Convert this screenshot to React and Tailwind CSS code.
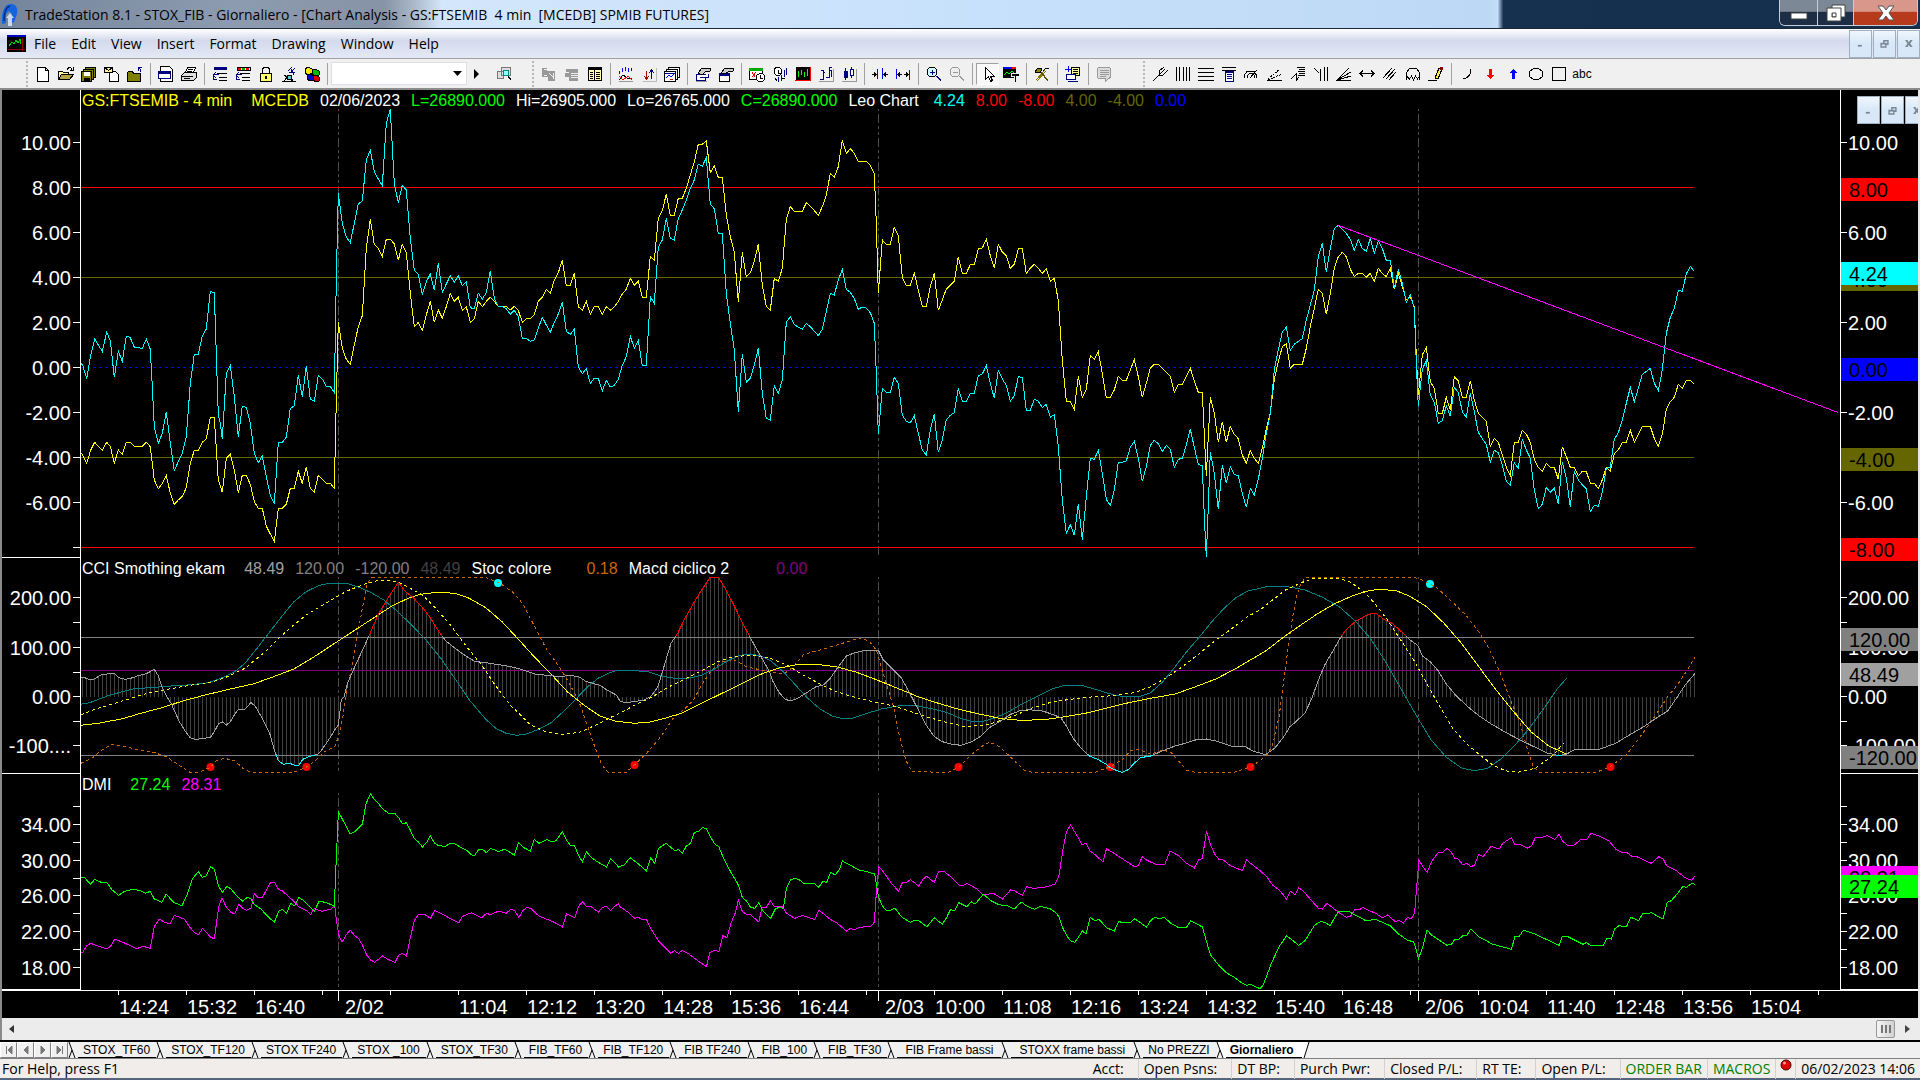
import { Fragment, useState } from 'react';
import clsx from 'clsx';

const K = '#000';
const NAVY = '#000080';
const GRAY = '#999';

// Toolbar glyphs on a 16x16 grid: [path, fill, stroke]
const ICONS = {
  new: [['M2.5 1.5h8l3 3v11h-11z', '#fff', K], ['M10.5 1.5v3h3', 'none', K]],
  open: [['M0.5 13.5v-8h4l1 1h5v3', '#ffff99', K], ['M0.5 13.5l3-5h12l-4 5z', '#b5a642', K], ['M9 3.5c2-3 4-2 5 0M15 1v3h-3', 'none', K]],
  saveAll: [['M4.5 1.5h10v10h-10z', '#808000', K], ['M2.5 3.5h10v10h-10z', '#808000', K], ['M0.5 5.5h10v10h-10z', '#808000', K], ['M3 6h6v4h-6z', '#fff', 'none'], ['M3 12h6v3h-6z', K, 'none']],
  mail: [['M5.5 5.5h6l3 3v7h-9z', '#fff', K], ['M0.5 1.5h8v5h-8z', '#fff799', K], ['M0.5 1.5l4 3l4-3', 'none', K]],
  folder: [['M0.5 15.5v-9l1-1h4l1 2h7v8z', '#808000', K], ['M14 6c0-2-1-3-2-4M11 5v-4h4', 'none', NAVY]],
  pageWin: [['M2.5 0.5h9l3 3v12h-12z', '#fff', K], ['M0.5 5.5h12v7h-12z', '#fff', NAVY], ['M0 5h13v3h-13z', NAVY, 'none']],
  print: [['M4.5 6.5l2-5h8l-2 5', '#fff', K], ['M7 3.5h5M6 5.5h5', 'none', K], ['M0.5 9.5l3-3h12v5l-3 3h-12z', '#ddd', K], ['M1 10.5h11M3 12.5h6', 'none', K]],
  rowsNavy: [['M2 1h13v3h-13z', NAVY, 'none'], ['M5 7.5h10M7 11.5h8M7 14.5h8', 'none', K], ['M1 8.5h6M4 6l-3 3l3 3M1 8v5h4', 'none', NAVY]],
  rowsColor: [['M2 1h13v3h-13z', '#fff', K], ['M3 2h3v2h-3z', 'red', 'none'], ['M7 2h3v2h-3z', '#0a0', 'none'], ['M11 2h3v2h-3z', 'red', 'none'], ['M5 7.5h10M7 11.5h8M7 14.5h8', 'none', K], ['M1 8.5h6M4 6l-3 3l3 3M1 8v5h4', 'none', NAVY]],
  lock: [['M4.5 7v-4l2-2h3l2 2v4', 'none', K], ['M2.5 7.5h11v8h-11z', '#ffff66', K], ['M7 10h2v3h-2z', K, 'none']],
  dish: [['M7 5l4-4M9 7l5-5M8 6l6 1M10 3l3 6', 'none', NAVY], ['M1 15.5h14M3 15l5-6l4 6M3 9l9 6', 'none', K], ['M6 9h4v4h-4z', '#5cc', K]],
  cubes: [['M1 3l3-2l4 2v4l-4 2l-3-2z', '#ffe800', K], ['M8 4l3-1l4 2v4l-4 1l-3-2z', '#0b0', K], ['M3 9l3-1l3 2v4l-3 1l-3-2z', '#00c', K], ['M9 10l3-1l3 2v4l-3 1l-3-2z', '#d00', K]],
  find: [['M1.5 5.5h6v7h-6zM5.5 1.5h9v8h-9z', '#ddd', '#777'], ['M7.5 4.5h5v5h-5z', '#9ff', '#088'], ['M12 10l3 4', 'none', K]],
  grayGridA: [['M1 2h5v3h8v10h-7v-4h-6z', GRAY, 'none'], ['M3 3h3M8 7l4 4M12 7v6M3 9h3', 'none', '#eee']],
  grayGridB: [['M2 3h12v12h-9v-4h-4z', GRAY, 'none'], ['M7 7h7M7 9h7M7 11h7M2 6h3', 'none', '#eee']],
  list: [['M1.5 1.5h13v13h-13z', '#ffffb0', K], ['M1 1h14v3h-14z', K, 'none'], ['M3 6.5h3M3 8.5h3M3 10.5h3M3 12.5h3M9 6.5h4M9 8.5h4M9 10.5h4M9 12.5h4M7.5 4v11', 'none', K]],
  wave: [['M1.5 8v-3M4.5 6v-4M7.5 5v-4M10.5 6v-4M13.5 5v-3', 'none', '#00f'], ['M1 14l4-5l4 3l5 1', 'none', K], ['M1 10l4 4l5-4l4 4', 'none', 'red'], ['M1 15.5h14', 'none', GRAY]],
  arrowsUD: [['M5.5 5v8M3 10l2.5 3l2.5-3', 'none', '#a00'], ['M10.5 13v-9M8 7l2.5-3l2.5 3', 'none', NAVY], ['M2 15.5h13.5v-14', 'none', '#bbb']],
  stack: [['M4.5 1.5h11v10h-11z', '#fff', K], ['M2.5 3.5h11v10h-11z', '#fff', K], ['M0.5 5.5h11v10h-11z', '#fff', K], ['M1 7h10', 'none', NAVY], ['M2 12l3-3l2 2l3-3', 'none', '#00f'], ['M6 13.5h3', 'none', 'red']],
  handPage: [['M1.5 8.5h9v6h-9z', '#fff', NAVY], ['M4.5 11.5h9v-4', '#fff', NAVY], ['M3 7l4-5h8v3l-5 1l-3 3z', '#ccc', K], ['M1 15.5h11', 'none', GRAY]],
  handWin: [['M1.5 7.5h10v8h-10z', '#fff', K], ['M1 7h11v3h-11z', NAVY, 'none'], ['M3 7l4-5h8v3l-5 1l-3 2z', '#ccc', K]],
  clockChart: [['M0.5 2.5h13v11h-13z', '#fff', K], ['M0 2h14v3h-14z', '#0a0', 'none'], ['M3 6l3 5M7 6l-4 5', 'none', 'red'], ['M7.5 9.5l3-2h3l2 2v4l-2 2h-4l-2-2z', '#fff', K], ['M11.5 9v3h2', 'none', K]],
  clockBars: [['M2.5 2.5l2-1h3l2 2v4l-2 2h-3l-2-2z', '#fff', K], ['M6.5 4v3h2', 'none', K], ['M6.5 11v5M9.5 9v6M12.5 4v7M14.5 2v7', 'none', NAVY], ['M3 12l2 3M10 12h3', 'none', K]],
  blackBars: [['M1 1h14v13h-14z', K, 'none'], ['M3.5 5v6M6.5 4v5M9.5 6v5M12.5 3v7', 'none', '#0f0'], ['M0 14.5h16M15.5 1v14', 'none', 'red']],
  ohlc: [['M2 13.5h3v-9h-2M5 6.5h2M8 11.5h3v-10h3M11 4.5h2v6', 'none', NAVY], ['M1 15.5h14.5v-13', 'none', GRAY]],
  candles: [['M4.5 2v12', 'none', NAVY], ['M3 5h3v6h-3z', NAVY, NAVY], ['M10.5 1v11', 'none', NAVY], ['M9 3h3v6h-3z', '#fff', NAVY], ['M1 15.5h14.5v-13', 'none', GRAY]],
  squeeze: [['M5.5 3v10M10.5 2v11', 'none', '#00f'], ['M0 8.5h4M2 6.5l2 2l-2 2M16 8.5h-4M14 6.5l-2 2l2 2', 'none', K]],
  widen: [['M1.5 3v10M14.5 4v10', 'none', '#00f'], ['M3 8.5h4M5 6.5l-2 2l2 2M9 8.5h4M11 6.5l2 2l-2 2', 'none', K]],
  zoomIn: [['M3.5 1.5h5l2 2v5l-2 2h-5l-2-2v-5z', '#cff', K], ['M6 3.5v5M3.5 6h5', 'none', NAVY], ['M10 10l5 5M11 10l4 4', 'none', NAVY]],
  zoomOut: [['M3.5 1.5h5l2 2v5l-2 2h-5l-2-2v-5z', '#eee', GRAY], ['M3.5 6h5', 'none', GRAY], ['M10 10l5 5M11 10l4 4', 'none', GRAY]],
  pointer: [['M5.5 1.5v12l3-3l2 5l2-1l-2-4h4z', '#fff', K]],
  chartText: [['M0 1h13v11h-13z', K, 'none'], ['M0 1h9v2h-9z', '#00f', 'none'], ['M9 1h4v2h-4z', 'red', 'none'], ['M1 9l3-3l2 2l3-3l2 2', 'none', '#0f0'], ['M8 7h8v3h-3v6h-2v-6h-3z', K, '#eee']],
  tools: [['M2 14l9-10M3 15l9-10', 'none', '#870'], ['M3 2l11 12M3 2v4h-2M4 3l10 12', 'none', '#550'], ['M9 5l3-3l3 1', 'none', K], ['M1 6l3-4l4 1l-2 4z', '#880', K]],
  addNote: [['M6.5 1.5h8v8h-8z', '#ffff99', K], ['M8 3.5h5M8 5.5h5M8 7.5h5', 'none', K], ['M3 0v6M0 3h6', 'none', '#00f'], ['M1.5 8.5h9v5h-9z', '#fff', NAVY], ['M3 15.5h10', 'none', NAVY]],
  grayNote: [['M2.5 1.5h11l1 1v9l-2 1l-3 3v-3h-7l-1-1v-9z', '#ddd', GRAY], ['M4 4.5h9M4 6.5h9M4 8.5h9M4 10.5h6', 'none', GRAY]],
  fork: [['M1 15l8-8M7 5v4h4M7 5l5-4M11 9l5-5M9 7l4-4', 'none', K]],
  vlines: [['M1.5 1v14M4.5 1v14M8.5 1v14M11.5 1v14M14.5 1v14', 'none', K]],
  hlines: [['M0 2.5h16M0 6.5h16M0 10.5h16M0 14.5h16', 'none', K]],
  calc: [['M1 1.5h14M1 4.5h14', 'none', K], ['M4.5 5.5h8v10h-8z', '#fff', NAVY], ['M6 8.5h5M6 10.5h5M6 12.5h5', 'none', NAVY], ['M4 5h9v2h-9z', NAVY, 'none']],
  arcs: [['M0.5 12v-3l3-4h6l3 4v3M3.5 12v-2l2-3h3l2 3v2M6 12l7-8', 'none', K]],
  fanDots: [['M1 13l12-10', 'none', K, '2 1'], ['M1 14l14-6', 'none', K, '2 1'], ['M0 14.5h15', 'none', K]],
  retrace: [['M1 13l5-5v7l3-4', 'none', K], ['M7 1.5h8M9 3.5h6M8 5.5h7M9 7.5h6M8 9.5h7', 'none', K]],
  timeBars: [['M1 2l5 5M7.5 3v12M11.5 1v14M14.5 1v14', 'none', K]],
  fan: [['M1 14l12-12M1 14l14-8M1 14l14-4', 'none', K], ['M0 14.5h15', 'none', K]],
  extend: [['M1 7.5h14M4 4.5l-3 3l3 3M12 4.5l3 3l-3 3', 'none', K]],
  parallel: [['M1 12l9-10M4 13l9-10M7 14l7-8', 'none', K]],
  cycle: [['M1.5 14v-7l3-5h7l3 5v7M1.5 10l3 3l2-3l2 4l2-4l2 3l2-3', 'none', K]],
  pencil: [['M7 12l4-10l3 1l-4 10z', '#ffee33', K], ['M12 1h3v3h-3z', '#800', 'none'], ['M0 14.5h9', 'none', K]],
  arc: [['M4 13c5-1 8-4 8-10', 'none', K]],
  downRed: [['M6.5 3h3v6h2.5l-4 4l-4-4h2.5z', 'red', 'none']],
  upBlue: [['M6.5 13h3v-6h2.5l-4-4l-4 4h2.5z', '#00f', 'none']],
  ellipse: [['M5.5 2.5h5l4 3v5l-4 3h-5l-4-3v-5z', 'none', K]],
  rect: [['M1.5 1.5h13v13h-13z', 'none', K]],
};

const TOOLBAR_A = ['new', 'open', 'saveAll', 'mail', 'folder', '|', 'pageWin', 'print', '|', 'rowsNavy', 'rowsColor', 'lock', 'dish', 'cubes', '|'];
const TOOLBAR_B = ['grayGridA', 'grayGridB', 'list', '|', 'wave', 'arrowsUD', 'stack', '|', 'handPage', 'handWin', '|', 'clockChart', 'clockBars', 'blackBars', 'ohlc', 'candles', '|', 'squeeze', 'widen', '|', 'zoomIn', 'zoomOut', '|', 'pointer', 'chartText', '|', 'tools', '|', 'addNote', '|', 'grayNote'];
const TOOLBAR_C = ['fork', 'vlines', 'hlines', 'calc', 'arcs', 'fanDots', 'retrace', 'timeBars', 'fan', 'extend', 'parallel', 'cycle', 'pencil', '|', 'arc', 'downRed', 'upBlue', 'ellipse', 'rect'];

// Series tiles: [left edge, horizontal units per pixel, "x,y ..."], y in thirds of a pixel
const FAST = [
  [0, 3, '243,820 248,826 260,866 272,795 284,747 295,765 307,784 320,727 331,752 343,862 355,784 367,814 379,738 391,743 403,772 427,775 439,747 451,778 457,890 463,1010 475,1060 487,1030 499,966 511,1060 523,1142 535,1115 547,1090 559,1040 571,880 583,793 595,793 607,738 619,717 631,604 643,608 655,975 661,1000 667,1047 679,850 691,826 703,920 715,1040 727,948 739,952 751,1000 763,1090 775,1118 787,1098 799,1160 811,1215 823,1242 835,1057 847,1057 859,1042 871,955 883,948 895,856 907,920 919,828 931,927 943,934 955,856 967,867 979,889 991,889 1003,908 1009,570 1015,310 1027,400 1039,442 1051,458 1063,400 1075,342 1087,333 1099,210 1111,181 1123,245 1135,267 1147,287 1159,100 1171,58 1183,280 1195,338 1207,286 1219,300 1231,445 1243,540 1255,553 1267,614 1279,575 1291,552 1303,600 1315,520 1327,607 1339,582 1351,557 1363,577 1375,557 1387,587 1399,575 1411,653 1423,656 1435,610 1447,627 1459,608 1471,543 1483,625 1495,649'],
  [500, 3, '0,650 7,650 19,656 31,673 43,661 55,680 67,745 79,745 91,754 103,750 115,715 127,682 139,705 151,727 163,697 175,672 187,637 199,724 211,733 223,718 235,830 247,851 259,836 271,880 283,865 295,865 307,902 319,871 331,891 343,886 355,868 367,826 379,800 391,739 403,775 415,751 427,828 439,826 451,620 463,640 475,472 487,450 499,385 511,445 523,451 535,385 547,360 559,330 571,295 583,270 595,223 607,229 619,203 631,343 643,356 655,430 667,430 679,610 691,700 703,780 715,965 727,793 739,877 751,865 763,825 775,775 787,910 799,985 811,991 823,886 835,910 847,870 859,697 871,680 883,704 907,718 919,700 931,710 955,737 967,718 979,665 991,610 1003,615 1015,570 1027,538 1039,598 1051,607 1063,626 1075,658 1087,651 1099,654 1111,668 1123,700 1129,850 1135,1033 1147,896 1159,907 1171,907 1183,862 1195,880 1207,975 1219,994 1231,998 1243,977 1255,1030 1267,1080 1279,1096 1291,1020 1303,973 1315,1087 1327,1050 1339,990 1351,976 1363,968 1375,895 1387,934 1399,934 1411,910 1423,910 1435,857 1447,852 1459,827 1471,880 1483,925'],
  [960, 3, '115,841 127,867 139,886 151,934 163,917 175,860 187,862 199,961 211,961 223,928 235,934 247,952 259,943 271,982 283,974 295,1070 307,1230 319,1330 331,1304 343,1336 355,1241 367,1349 379,1220 391,1105 403,1108 415,1081 427,1150 439,1228 451,1246 463,1200 475,1117 487,1117 499,1113 511,1072 523,1054 535,1105 547,1174 559,1130 571,1066 583,1051 595,1061 607,1085 619,1066 631,1078 643,1132 655,1108 667,1105 679,1065 691,1018 703,1072 715,1123 727,1127 733,1280 739,1400 745,1250 751,1085 763,1150 775,1258 787,1126 799,1180 811,1130 823,1153 835,1157 847,1210 859,1252 871,1195 883,1216 895,1168 907,1105 919,1030 931,970 943,840 955,780 967,725 979,712 991,781 1003,763 1015,754 1027,746 1039,690 1051,645 1063,600 1075,500 1087,460 1099,547 1111,475 1123,415 1135,406 1147,418 1159,430 1171,448 1183,481 1195,448 1207,475 1219,484 1231,445 1243,490 1255,452 1267,475 1279,511 1291,511 1303,595 1315,538 1327,580 1339,637 1351,614 1363,655 1369,820 1375,949 1387,838 1399,812 1411,915 1423,937 1435,1000 1447,992 1459,947 1471,979 1483,892'],
  [1400, 3, '175,907 187,965 199,982 211,910 223,965 235,1027 247,1046 259,1063 271,1117 283,1081 295,1088 307,1126 319,1174 331,1186 343,1118 355,1135 367,1048 379,1080 391,1105 403,1200 415,1256 427,1243 439,1192 451,1207 463,1195 475,1241 487,1115 499,1165 511,1250 523,1144 535,1170 547,1184 559,1196 571,1265 583,1246 595,1249 607,1207 619,1135 631,1132 643,1048 655,1028 667,990 679,940 691,892 703,935 715,895 727,853 739,844 751,835 763,880 775,902 787,840 799,730 811,682 823,655 835,601 847,604 859,552 871,529 881,542'],
];

const SLOW = [
  [0, 3, '243,1090 248,1095 260,1120 272,1080 284,1057 295,1069 307,1081 320,1057 331,1069 343,1120 355,1080 367,1093 379,1057 391,1057 403,1069 427,1069 439,1057 451,1070 463,1170 475,1196 487,1180 499,1156 511,1210 523,1243 535,1230 547,1219 559,1193 571,1120 583,1081 595,1081 607,1057 619,1046 631,982 643,982 655,1170 667,1207 679,1105 691,1093 703,1140 715,1208 727,1156 739,1156 751,1183 763,1235 775,1255 787,1255 799,1308 811,1332 823,1355 835,1255 847,1255 859,1243 871,1195 883,1195 895,1144 907,1180 919,1132 931,1195 943,1207 955,1156 967,1168 979,1180 991,1180 1003,1195 1009,930 1015,697 1027,775 1039,808 1051,823 1063,765 1075,710 1087,677 1099,475 1111,388 1123,463 1135,475 1147,499 1159,448 1171,448 1183,462 1195,511 1207,463 1219,488 1231,610 1243,710 1255,697 1267,721 1279,675 1291,634 1303,697 1315,660 1327,685 1339,650 1351,610 1363,634 1375,622 1387,661 1399,650 1411,697 1423,686 1435,634 1447,650 1459,634 1471,622 1483,634 1495,649'],
  [500, 3, '0,649 19,649 31,660 43,649 55,661 67,697 79,686 91,686 103,674 115,634 127,622 139,598 151,610 163,570 175,548 187,511 199,586 211,586 223,550 235,650 247,661 259,634 271,673 283,650 295,650 307,673 319,650 331,661 343,650 355,634 367,612 379,598 391,565 403,586 415,574 427,622 439,622 451,499 463,511 475,385 487,362 499,313 511,376 523,376 535,325 547,325 559,295 571,255 583,215 595,163 607,163 619,152 631,248 643,228 655,262 667,262 679,375 691,440 703,487 715,635 727,487 739,559 751,548 763,514 775,463 787,585 799,649 811,661 823,565 835,574 847,535 859,388 871,350 883,364 907,364 919,338 931,348 955,376 967,350 979,315 991,251 1003,262 1015,230 1027,151 1039,190 1051,176 1063,190 1075,214 1099,214 1111,226 1123,251 1129,400 1135,610 1147,450 1159,463 1171,463 1183,412 1195,438 1207,562 1219,586 1231,586 1243,550 1255,600 1267,649 1279,649 1291,590 1303,550 1315,661 1327,630 1339,597 1351,586 1363,574 1375,500 1387,550 1399,550 1411,524 1423,524 1435,476 1447,474 1459,448 1471,497 1483,535'],
  [960, 3, '115,463 127,486 139,498 151,535 163,523 175,476 187,476 199,550 211,535 223,523 235,535 247,550 259,536 271,574 283,565 295,632 307,810 319,934 331,934 343,959 355,859 367,922 379,899 391,796 403,808 415,785 427,850 439,922 451,922 463,900 475,859 487,871 499,871 511,840 523,809 535,860 547,922 559,880 571,835 583,823 595,823 607,835 619,846 631,859 643,907 655,883 667,883 679,860 691,835 703,872 715,907 727,907 739,1157 751,922 763,970 775,1057 787,995 799,1057 811,1009 823,1033 835,1046 847,1095 859,1120 871,1081 883,1105 895,1120 907,1075 919,1015 931,970 943,868 955,815 967,770 979,761 991,835 1003,823 1027,823 1039,775 1051,710 1063,655 1075,598 1087,610 1099,673 1111,610 1123,535 1135,500 1147,487 1159,500 1171,538 1183,560 1195,550 1207,550 1219,562 1231,550 1243,574 1255,535 1267,550 1279,560 1291,535 1303,598 1315,550 1327,590 1339,630 1351,622 1363,650 1369,800 1375,915 1387,795 1399,772 1411,875 1423,895 1435,970 1447,970 1459,922 1471,960 1483,860'],
  [1400, 3, '175,872 187,922 199,922 211,872 223,930 235,970 247,982 259,994 271,1069 283,1045 295,1057 307,1095 319,1132 331,1157 343,1057 355,1057 367,1021 379,1032 391,1057 403,1108 415,1132 427,1144 439,1120 451,1132 463,1132 475,1168 487,1070 499,1100 511,1132 523,1132 535,1157 547,1144 559,1144 571,1180 583,1180 595,1195 607,1170 619,1132 631,1144 643,1092 655,1080 667,1057 679,1057 691,1021 703,1057 715,1033 727,1009 751,1009 763,1045 775,1069 787,1033 799,958 811,935 823,922 835,883 847,895 859,871 871,871 881,881'],
];

const CCI = [
  [0, 2.45, '198,382 205,382 218,388 230,388 247,375 267,371 281,371 291,383 308,388 330,382 340,376 352,374 365,367 378,358 388,378 396,408 408,438 420,462 430,490 440,516 452,540 466,563 480,569 495,565 515,563 525,545 536,520 545,516 555,525 565,514 574,495 584,478 600,477 615,458 625,468 640,500 655,535 662,555 672,600 682,632 694,643 710,640 722,646 732,646 742,628 755,621 768,616 780,612 790,597 805,570 820,540 829,525 836,450 843,440 850,405 862,370 875,335 890,295 905,256 915,225 928,190 942,163 955,135 966,115 976,97 985,112 995,127 1010,140 1025,160 1040,180 1055,205 1070,235 1080,253 1092,272 1110,290 1130,308 1150,325 1165,335 1185,337 1210,342 1240,347 1275,357 1310,372 1340,376 1375,380 1392,376 1418,380 1435,394 1470,406 1490,422 1510,435'],
  [620, 2.45, '0,453 15,459 35,454 55,452 75,440 92,412 103,370 115,320 125,280 142,248 160,203 180,160 200,120 220,83 242,83 260,120 280,168 300,218 318,260 335,298 350,330 365,362 375,395 390,428 405,448 418,453 435,445 455,430 480,410 498,405 515,385 535,350 555,318 575,308 600,301 633,301 645,330 665,353 690,385 710,430 730,478 750,525 770,560 790,575 810,582 835,586 860,576 885,558 905,533 930,515 955,494 980,482 1000,479 1035,483 1055,491 1080,503 1095,530 1110,565 1130,595 1150,618 1170,628 1190,642 1205,656 1230,667 1245,659 1260,640 1275,623 1300,618 1330,602 1360,588 1390,578 1415,568 1437,567 1460,573 1500,589'],
  [1240, 2.303, '0,590 12,590 30,603 58,614 80,595 100,562 115,530 130,514 150,488 165,447 180,392 195,345 215,300 235,255 245,238 265,215 290,197 305,189 315,192 330,207 350,220 370,243 390,268 410,287 420,318 438,335 455,360 475,402 495,433 520,465 550,497 580,523 610,546 645,570 680,592 705,608 735,617 752,612 770,600 800,598 830,597 865,580 890,560 930,530 960,503 985,483 1005,445 1025,405 1048,370'],
];

const TEAL = [
  [0, 2.45, '198,463 220,458 245,446 270,435 300,425 330,416 380,412 420,408 470,404 510,398 530,390 550,380 575,365 600,340 630,295 660,247 690,200 720,155 750,125 780,107 805,100 850,100 880,112 910,128 940,150 970,180 1000,215 1040,265 1080,325 1110,378 1150,450 1190,508 1215,535 1240,550 1265,556 1290,552 1320,538 1350,518 1380,485 1410,448 1440,410 1465,385 1490,370 1510,362'],
  [620, 2.45, '0,362 40,362 70,366 100,378 130,384 170,384 200,376 230,358 260,335 290,317 320,312 345,318 370,333 400,365 430,405 460,445 490,477 520,498 545,506 570,504 600,492 640,477 680,468 720,466 770,478 800,487 830,503 860,514 890,514 920,503 950,487 980,465 1020,440 1060,416 1090,406 1130,406 1170,420 1210,435 1240,441 1275,439 1300,428 1330,395 1360,350 1390,303 1420,260 1450,215 1480,175 1510,142 1540,122 1568,115'],
  [1240, 2.303, '60,110 110,110 150,120 190,142 230,172 265,212 300,265 335,335 370,415 410,505 440,570 475,622 510,654 540,662 570,655 600,628 630,590 660,545 700,475 730,418 752,385'],
];

const CYCLE_DASHED = [
  [0, 2.45, '198,494 240,475 300,453 360,430 410,418 470,405 520,396 560,379 600,355 650,305 700,245 750,195 800,158 850,123 900,99 930,91 950,91 975,96 1005,115 1035,135 1060,165 1100,220 1140,285 1180,345 1210,400 1250,465 1300,525 1340,547 1380,553 1420,547 1460,525 1500,500'],
  [620, 2.45, '0,490 40,463 80,440 120,410 160,387 200,362 240,335 270,323 310,316 345,319 375,328 410,346 450,376 490,402 530,425 570,440 620,455 670,468 700,480 750,500 800,517 840,529 890,527 930,513 970,495 1010,474 1060,455 1110,447 1160,440 1210,437 1260,428 1300,410 1340,382 1380,348 1420,310 1460,270 1500,235 1540,198 1568,180'],
  [1240, 2.303, '60,165 80,145 105,120 140,99 165,87 200,84 230,86 255,97 285,125 310,160 340,210 370,270 400,330 430,400 460,470 490,535 520,580 550,612 580,643 610,662 640,667 680,655 720,617 745,580'],
];

const CYCLE = [
  [0, 2.45, '198,526 245,519 300,506 345,490 400,472 450,452 500,436 560,418 620,402 670,380 720,357 770,320 820,280 870,240 920,200 960,168 1000,145 1030,133 1070,127 1115,130 1150,145 1190,173 1230,215 1270,268 1310,322 1350,372 1390,425 1430,465 1470,498 1510,514'],
  [620, 2.45, '0,515 35,520 70,517 110,505 150,490 200,460 250,430 300,400 350,370 390,354 430,345 480,343 530,350 580,367 630,390 680,415 730,440 780,460 830,478 880,492 930,505 980,511 1040,509 1090,500 1140,490 1190,475 1240,460 1300,445 1360,432 1410,410 1460,387 1510,355 1568,313'],
  [1240, 2.303, '60,302 100,262 140,225 180,190 220,160 260,137 290,124 320,118 360,122 390,138 430,170 470,220 510,280 550,350 590,420 630,485 670,545 710,587 752,612'],
];

const STOC = [
  [0, 2.45, '198,640 225,625 250,600 275,583 300,588 340,600 380,608 410,622 435,643 465,667 490,666 515,652 530,632 550,625 575,632 595,655 615,667 720,667 750,652 775,630 795,605 820,590 829,560 840,500 850,420 862,350 875,260 890,160 900,100 912,82 1190,82 1225,100 1255,125 1280,160 1310,230 1340,300 1370,350 1395,400 1420,460 1440,530 1460,600 1475,645 1490,667'],
  [620, 2.45, '0,667 15,667 35,645 65,610 100,560 130,505 160,475 180,450 200,405 225,360 250,335 280,330 310,350 345,360 370,365 400,373 425,350 450,313 490,300 540,282 585,264 610,273 628,300 640,350 655,410 670,470 685,560 700,630 715,665 805,667 830,652 860,615 885,590 905,576 930,590 960,625 990,660 1010,667 1165,667 1200,650 1230,630 1250,603 1270,598 1300,612 1330,600 1350,607 1370,635 1390,662 1410,667 1505,667 1545,650 1568,632'],
  [1240, 2.303, '60,618 75,585 90,500 100,400 110,300 120,210 130,140 140,100 152,82 400,82 420,90 450,110 480,145 520,195 550,245 575,300 600,370 620,440 645,520 660,590 675,650 690,667 820,667 850,652 890,615 910,580 930,545 955,500 985,440 1010,400 1030,360 1048,322'],
];

const DMI_PLUS = [
  [0, 2.45, '198,982 208,984 222,1003 232,988 250,998 262,998 275,1020 290,1036 305,1024 325,1018 345,1022 357,1030 368,1024 378,1047 397,1057 407,1033 427,1058 446,1067 458,1035 472,985 486,965 496,982 505,978 516,950 525,958 536,1010 545,1027 556,1009 566,1017 580,1037 594,1053 606,1042 615,1047 622,1062 640,1078 655,1098 672,1117 683,1083 692,1078 702,1090 712,1060 722,1068 732,1042 745,1053 758,1070 770,1084 782,1053 800,1058 819,1068 824,925 829,785 842,815 858,852 872,842 888,822 897,760 908,732 918,750 928,762 938,777 952,790 967,790 978,805 986,822 996,818 1005,840 1015,865 1025,876 1035,891 1045,878 1054,857 1065,880 1075,887 1092,889 1102,880 1115,882 1130,893 1145,902 1155,914 1162,917 1172,900 1182,898 1192,908 1202,895 1222,905 1235,898 1245,903 1260,916 1270,878 1282,892 1299,903 1309,868 1320,880 1340,869 1352,875 1362,872 1378,845 1388,870 1397,885 1408,888 1417,915 1427,935 1437,905 1447,920 1457,930 1470,940 1486,951 1496,927 1506,938 1516,952'],
  [620, 2.45, '0,949 10,945 25,923 45,942 65,963 75,923 85,940 94,895 113,880 135,903 142,898 153,910 163,887 173,880 182,848 193,843 203,832 212,837 222,862 232,882 242,890 252,920 270,963 290,1005 300,1043 310,1053 320,1072 330,1075 340,1058 350,1082 369,1105 380,1078 390,1071 400,1076 408,1015 418,990 428,985 440,990 450,1000 475,1000 487,1012 497,994 506,998 516,967 527,975 537,960 545,933 565,946 585,960 605,965 624,972 633,1040 643,1068 653,1082 664,1080 673,1074 692,1103 712,1117 722,1111 732,1112 752,1130 770,1103 780,1114 790,1122 800,1103 810,1078 820,1083 830,1058 850,1070 860,1055 870,1062 890,1033 910,1053 928,1064 948,1067 967,1077 977,1062 985,1056 995,1067 1015,1078 1030,1069 1055,1077 1067,1087 1075,1100 1085,1135 1095,1158 1104,1173 1114,1177 1124,1160 1133,1143 1142,1152 1152,1103 1165,1112 1173,1107 1192,1133 1211,1143 1222,1114 1232,1119 1250,1118 1261,1106 1290,1131 1300,1112 1310,1102 1322,1106 1333,1102 1350,1120 1369,1133 1388,1132 1398,1113 1410,1120 1427,1131 1437,1175 1447,1215 1465,1243 1485,1268 1505,1282 1525,1300 1536,1306 1545,1303 1568,1316'],
  [1240, 2.303, '52,1308 60,1283 72,1240 90,1190 107,1157 120,1170 135,1186 150,1172 160,1150 172,1125 187,1114 197,1118 208,1127 217,1105 227,1084 250,1084 262,1093 275,1102 290,1112 312,1108 330,1118 347,1128 365,1152 385,1170 400,1176 405,1195 411,1226 421,1190 431,1140 441,1155 458,1170 477,1186 487,1183 495,1167 502,1170 513,1157 522,1157 532,1136 550,1161 565,1170 580,1182 600,1189 625,1198 633,1160 642,1160 653,1141 675,1150 700,1165 735,1186 742,1160 755,1160 790,1183 797,1178 808,1186 837,1186 845,1165 855,1167 863,1136 873,1127 890,1130 900,1102 918,1112 928,1090 940,1092 947,1087 957,1095 974,1107 984,1057 993,1052 1008,1030 1020,1009 1028,1012 1040,1000 1047,1003'],
];

const DMI_MINUS = [
  [0, 2.45, '198,1208 203,1207 212,1188 222,1180 245,1190 262,1197 272,1187 281,1168 300,1176 315,1185 335,1196 350,1189 368,1195 378,1130 390,1107 403,1117 417,1121 427,1096 440,1102 452,1108 466,1133 477,1148 486,1154 496,1136 506,1147 516,1162 525,1166 536,1070 544,1043 555,1073 566,1087 575,1092 585,1063 594,1074 604,1081 615,1075 623,1031 632,1042 643,1042 653,1020 663,997 673,997 682,1018 692,1023 710,1043 722,1056 732,1070 742,1077 752,1082 761,1093 770,1076 788,1084 810,1078 820,1065 824,1110 830,1155 838,1177 848,1155 858,1140 868,1156 878,1165 888,1185 898,1214 908,1230 918,1237 937,1218 950,1228 968,1237 977,1215 985,1210 996,1218 1005,1165 1015,1112 1025,1093 1040,1093 1055,1105 1065,1081 1080,1090 1102,1105 1124,1119 1132,1100 1155,1088 1180,1103 1192,1090 1202,1094 1222,1083 1240,1090 1252,1078 1262,1083 1271,1103 1282,1080 1292,1072 1302,1077 1320,1098 1340,1108 1360,1118 1378,1131 1388,1092 1398,1097 1408,1104 1417,1070 1427,1055 1437,1070 1447,1069 1466,1087 1475,1073 1485,1069 1496,1082 1506,1068 1515,1062'],
  [620, 2.45, '0,1070 20,1087 36,1105 45,1102 55,1110 65,1108 75,1135 94,1172 110,1192 124,1210 133,1202 143,1210 152,1202 170,1213 190,1232 212,1250 220,1208 232,1200 242,1205 252,1157 262,1163 272,1120 282,1090 290,1050 300,1085 310,1093 320,1094 340,1116 348,1073 358,1073 368,1052 378,1070 398,1070 408,1090 428,1105 447,1096 477,1109 487,1081 497,1090 515,1108 530,1118 555,1143 565,1135 575,1140 585,1132 605,1130 615,1128 623,1117 628,1030 634,950 645,965 665,1000 682,1023 692,998 702,997 712,989 732,1009 742,988 751,979 770,997 780,965 795,965 810,980 830,1005 840,1007 850,1000 875,1017 890,1035 915,1030 937,1047 957,1020 967,1023 986,1036 997,1010 1015,1016 1025,1013 1040,1012 1066,1002 1075,980 1085,900 1094,845 1104,825 1122,862 1132,885 1142,880 1152,903 1165,915 1183,936 1192,896 1210,910 1225,922 1262,951 1270,945 1280,920 1290,930 1310,942 1335,942 1348,903 1370,918 1388,940 1407,954 1417,930 1427,925 1437,843 1447,885 1457,912 1467,928 1477,929 1495,947 1510,954 1525,962 1535,930 1545,940 1568,962'],
  [1240, 2.303, '60,978 75,1005 92,1022 107,1047 116,1024 127,1034 135,1013 145,1022 165,1052 180,1074 190,1077 200,1060 212,1072 230,1090 245,1102 255,1098 265,1078 275,1079 283,1072 300,1083 315,1092 328,1103 340,1095 357,1114 368,1112 376,1119 386,1102 394,1107 402,1090 407,1010 412,930 420,948 431,967 441,935 457,907 466,908 477,895 487,908 495,925 502,926 513,945 522,940 532,950 540,945 550,913 560,920 578,889 597,897 605,880 625,863 633,883 645,884 662,894 671,888 680,863 695,862 707,857 725,868 735,853 742,872 753,885 770,885 785,868 800,867 808,850 825,857 850,873 865,897 878,907 892,908 902,919 912,919 947,940 965,920 975,928 983,948 1005,962 1025,983 1040,991 1047,979'],
];

const AXIS_W = 81;
const LAST_X = 1613;
const SESSIONS = [257.5, 797.5, 1337.5];

function decode(tiles, dy) {
  return tiles.flatMap(([left, k, data]) =>
    data.split(' ').map((p) => {
      const [x, y] = p.split(',').map(Number);
      return [left + x / k - AXIS_W, y / 3 + dy];
    })
  );
}

function valueAt(points, x) {
  const i = points.findIndex((p) => p[0] >= x);
  if (i < 0) return points[points.length - 1][1];
  if (i === 0) return points[0][1];
  const [x0, y0] = points[i - 1];
  const [x1, y1] = points[i];
  return y0 + ((y1 - y0) * (x - x0)) / (x1 - x0 || 1);
}

const cciPoints = decode(CCI, -27);
const histogram = Array.from({ length: 404 }, (_, i) => {
  const x = 1.5 + i * 4;
  return `M${x} 119.5V${valueAt(cciPoints, x).toFixed(1)}`;
}).join('');

function Line({ points, color, dash, clip }) {
  return (
    <polyline
      points={points.map(([x, y]) => `${x.toFixed(1)},${y.toFixed(1)}`).join(' ')}
      fill="none"
      stroke={color}
      strokeDasharray={dash}
      clipPath={clip}
    />
  );
}

function Level({ y, color, dash }) {
  return <path d={`M0 ${y}H${LAST_X}`} stroke={color} strokeDasharray={dash} />;
}

function Sessions({ height }) {
  return SESSIONS.map((x) => (
    <path key={x} d={`M${x} 0V${height}`} stroke="#4c4c4c" strokeDasharray="9 3 3 3 3 3" strokeDashoffset="19" />
  ));
}

function Axis({ side, ticks, tags = [] }) {
  const left = side === 'left';
  return (
    <svg
      className={clsx('h-full w-full overflow-visible border-b border-white text-xl', left ? 'border-r' : 'border-l')}
      fill="#fff"
    >
      {ticks.map(([y, label]) => (
        <Fragment key={y}>
          <path d={left ? `M71 ${y + 0.5}h8` : `M0 ${y + 0.5}h6`} stroke="#fff" shapeRendering="crispEdges" />
          {label && (
            <text x={left ? 69 : 7} y={y + 8} textAnchor={left ? 'end' : 'start'}>
              {label}
            </text>
          )}
        </Fragment>
      ))}
      {tags.map(([y, label, color]) => (
        <Fragment key={y}>
          <rect x="0" y={y} width="100%" height="23" fill={color} />
          <text x="8" y={y + 19} fill="#000">
            {label}
          </text>
        </Fragment>
      ))}
    </svg>
  );
}

function Pane({ height, legend, left, right, tags, children }) {
  return (
    <section className={clsx('grid grid-cols-[79px_minmax(0,1fr)_78px]', height)}>
      <Axis side="left" ticks={left} />
      <div className="flex min-w-0 flex-col overflow-hidden">
        <div className="flex h-[19px] shrink-0 items-end gap-[11px] pl-px text-base leading-[17px] whitespace-nowrap">
          {legend.map(([text, cls], i) => (
            <span key={i} className={cls}>
              {text}
            </span>
          ))}
        </div>
        <svg className="min-h-0 w-full flex-1" shapeRendering="crispEdges">
          {children}
        </svg>
      </div>
      <Axis side="right" ticks={right} tags={tags} />
    </section>
  );
}

const TIMES = [
  [118, '14:24'], [186, '15:32'], [254, '16:40'], [322], [390], [458, '11:04'], [526, '12:12'], [594, '13:20'],
  [662, '14:28'], [730, '15:36'], [798, '16:44'], [866], [934, '10:00'], [1002, '11:08'], [1070, '12:16'],
  [1138, '13:24'], [1206, '14:32'], [1274, '15:40'], [1342, '16:48'], [1410], [1478, '10:04'], [1546, '11:40'],
  [1614, '12:48'], [1682, '13:56'], [1750, '15:04'], [1818],
];
const DAYS = [[338, '2/02'], [878, '2/03'], [1418, '2/06']];

function Charts() {
  return (
    <main className="relative overflow-hidden border-x-2 border-l-[#8a8a8a] border-r-[#e8e8e8] bg-black font-['Liberation_Sans',sans-serif] text-white">
      <Pane
        height="h-[468px]"
        legend={[
          ['GS:FTSEMIB - 4 min', 'text-[#ff0] mr-2'],
          ['MCEDB', 'text-[#ff0]'],
          ['02/06/2023'],
          ['L=26890.000', 'text-[#0f0]'],
          ['Hi=26905.000'],
          ['Lo=26765.000'],
          ['C=26890.000', 'text-[#0f0]'],
          ['Leo Chart', 'mr-1'],
          ['4.24', 'text-[#0ff]'],
          ['8.00', 'text-[#f00]'],
          ['-8.00', 'text-[#f00]'],
          ['4.00', 'text-[#666600]'],
          ['-4.00', 'text-[#666600]'],
          ['0.00', 'text-[#00f]'],
        ]}
        left={[[52, '10.00'], [97, '8.00'], [142, '6.00'], [187, '4.00'], [232, '2.00'], [277, '0.00'], [322, '-2.00'], [367, '-4.00'], [412, '-6.00'], [457]]}
        right={[[52, '10.00'], [142, '6.00'], [232, '2.00'], [322, '-2.00'], [412, '-6.00']]}
        tags={[[88, '8.00', '#f00'], [178, '4.00', '#666600'], [172, '4.24', '#0ff'], [268, '0.00', '#00f'], [358, '-4.00', '#666600'], [448, '-8.00', '#f00']]}
      >
        <Sessions height={446} />
        <Level y={78.5} color="#f00" />
        <Level y={168.5} color="#666600" />
        <Level y={258.5} color="#00f" dash="3 3" />
        <Level y={348.5} color="#666600" />
        <Level y={438.5} color="#f00" />
        <Line points={decode(SLOW, -19)} color="#ff0" />
        <Line points={decode(FAST, -19)} color="#0ff" />
        <path d="M1257.5 116.5L1757 303.5" stroke="#f0f" />
      </Pane>

      <Pane
        height="h-[216px]"
        legend={[
          ['CCI Smothing ekam', 'mr-2'],
          ['48.49', 'text-[#a0a0a0]'],
          ['120.00', 'text-[#808080]'],
          ['-120.00', 'text-[#808080]'],
          ['48.49', 'text-[#404040]'],
          ['Stoc colore', 'mr-6'],
          ['0.18', 'text-[#cc6600]'],
          ['Macd ciclico 2', 'mr-9'],
          ['0.00', 'text-[#800080]'],
        ]}
        left={[[39, '200.00'], [64], [89, '100.00'], [114], [138, '0.00'], [163], [187, '-100....']]}
        right={[[39, '200.00'], [64], [89, '100.00'], [138, '0.00'], [163], [187, '-100.00']]}
        tags={[[70, '120.00', '#808080'], [105, '48.49', '#a0a0a0'], [188, '-120.00', '#808080']]}
      >
        <defs>
          <clipPath id="overbought">
            <rect x="0" y="0" width="1759" height="59" />
          </clipPath>
          <clipPath id="oversold">
            <rect x="0" y="178" width="1759" height="20" />
          </clipPath>
        </defs>
        <Sessions height={194} />
        <path d={histogram} stroke="#404040" />
        <Level y={60.5} color="#808080" />
        <Level y={178.5} color="#808080" />
        <Level y={93.5} color="#800080" />
        <g fill="#f00" shapeRendering="auto">
          {[129, 225, 553, 877, 1029, 1169, 1529].map((x) => (
            <circle key={x} cx={x + 0.5} cy={x === 553 ? 188 : 190} r="4" />
          ))}
          <circle cx="417" cy="6" r="4" fill="#0ff" />
          <circle cx="1349" cy="7" r="4" fill="#0ff" />
        </g>
        <Line points={decode(STOC, -27)} color="#cc6600" dash="3 3" />
        <Line points={decode(TEAL, -27)} color="#008080" />
        <Line points={decode(CYCLE_DASHED, -27)} color="#ff0" dash="3 3" />
        <Line points={decode(CYCLE, -27)} color="#ff0" />
        <Line points={cciPoints} color="#a0a0a0" />
        <Line points={cciPoints} color="#f00" clip="url(#overbought)" />
        <Line points={cciPoints} color="#0ff" clip="url(#oversold)" />
      </Pane>

      <Pane
        height="h-[216px]"
        legend={[['DMI', 'mr-2'], ['27.24', 'text-[#0f0]'], ['28.31', 'text-[#f0f]']]}
        left={[[32], [50, '34.00'], [68], [86, '30.00'], [104], [121, '26.00'], [139], [157, '22.00'], [175], [193, '18.00']]}
        right={[[32], [50, '34.00'], [68], [86, '30.00'], [121, '26.00'], [139], [157, '22.00'], [175], [193, '18.00']]}
        tags={[[92, '28.31', '#f0f'], [101, '27.24', '#0f0']]}
      >
        <Sessions height={194} />
        <Line points={decode(DMI_MINUS, -243)} color="#f0f" />
        <Line points={decode(DMI_PLUS, -243)} color="#0f0" />
      </Pane>

      <svg className="block h-7 w-full border-t border-white text-xl" fill="#fff">
        {TIMES.map(([x, label]) => (
          <Fragment key={x}>
            <path d={`M${x - 1.5} 0v4`} stroke="#fff" />
            {label && (
              <text x={x - 1} y="23">
                {label}
              </text>
            )}
          </Fragment>
        ))}
        {DAYS.map(([x, label]) => (
          <Fragment key={x}>
            <path d={`M${x - 1.5} 0v10`} stroke="#fff" />
            <text x={x + 5} y="23">
              {label}
            </text>
          </Fragment>
        ))}
      </svg>

      {/* maximised child window buttons hang over the right scale */}
      <div className="absolute top-[6px] -right-[10px]">
        <ChildButtons />
      </div>
    </main>
  );
}

function ChildButtons() {
  const glyphs = [
    ['Minimize', 'M4 10h6v2.5h-6z'],
    ['Restore', 'M6 3h8v7h-3v4h-9v-7h4zM8 5v2h3v1h1v-3zM4 9.5v2.5h5v-2.5z'],
    ['Close', 'M3 3h3.500l2 3l2-3h3.500l-3.500 5l3.500 5h-3.500l-2-3l-2 3h-3.500l3.500-5z'],
  ];
  return (
    <div className="flex gap-px">
      {glyphs.map(([label, d]) => (
        <button
          key={label}
          type="button"
          aria-label={label}
          className="flex h-7 w-[23px] items-center justify-center border border-[#9fb0c0] bg-linear-to-b from-[#f0f6fd] to-[#d8e8f8] to-50%"
        >
          <svg viewBox="0 0 16 16" className="size-[11px]" fill="#7a8794" fillRule="evenodd">
            <path d={d} />
          </svg>
        </button>
      ))}
    </div>
  );
}

function TitleBar() {
  return (
    <header className="flex h-[29px] items-start justify-between border-b border-[#1b2636] bg-[linear-gradient(90deg,#74859b_0%,#8d9bb0_12%,#8793a6_20%,#a9b6c8_21.5%,#d3e6fb_23%,#c8e1fb_50%,#bdd8f5_77.5%,#c4def8_78%,#16304f_78.3%,#14304e_100%)] font-['Open_Sans',sans-serif]">
      <div className="flex items-center pt-[3px]">
        <svg viewBox="0 0 20 24" className="ml-px h-6 w-5">
          <path d="M1 21C0 8 4 1 10 1c5 0 7 4 6 10l-3 8-2 1V11l-3-3-3 3v9z" fill="#1464e0" />
          <path d="M3 18C3 9 5 4 9 3" fill="none" stroke="#0a2c88" strokeWidth="1.5" />
          <path d="M9 10l4 5h-2v8H7v-8H5z" fill="#c8d8ec" />
        </svg>
        <h1 className="ml-1 text-sm leading-6 whitespace-pre text-black">
          TradeStation 8.1 - STOX_FIB - Giornaliero - [Chart Analysis - GS:FTSEMIB  4 min  [MCEDB] SPMIB FUTURES]
        </h1>
      </div>
      <div className="mr-[2px] flex h-[26px] overflow-hidden rounded-b-md border border-t-0 border-[#c4cdd8]">
        <button type="button" aria-label="Minimize" className="flex w-[38px] items-center justify-center border-r border-[#c4cdd8] bg-linear-to-b from-[#7d8896] from-45% to-[#1b2e45] to-50%">
          <svg viewBox="0 0 18 18" className="size-[18px]"><path d="M1 9h16v6H1z" fill="#fff" stroke="#444" /></svg>
        </button>
        <button type="button" aria-label="Restore" className="flex w-9 items-center justify-center border-r border-[#c4cdd8] bg-linear-to-b from-[#7d8896] from-45% to-[#1b2e45] to-50%">
          <svg viewBox="0 0 20 18" className="h-[18px] w-5" fillRule="evenodd">
            <path d="M6 1h13v12H6z" fill="#fff" stroke="#444" />
            <path d="M1 4h14v13H1zM6 9v4h4V9z" fill="#fff" stroke="#444" />
          </svg>
        </button>
        <button type="button" aria-label="Close" className="flex w-[63px] items-center justify-center bg-linear-to-b from-[#d8978a] from-45% to-[#b83a1c] to-50%">
          <svg viewBox="0 0 20 18" className="h-[18px] w-5">
            <path d="M2 2h5l3 4 3-4h5l-5 7 5 7h-5l-3-4-3 4H2l5-7z" fill="#fff" stroke="#555" />
          </svg>
        </button>
      </div>
    </header>
  );
}

function MenuBar() {
  return (
    <nav className="flex h-[29px] items-center justify-between bg-linear-to-b from-white via-[#d3daec] via-40% to-[#e4e9f6] font-['Open_Sans',sans-serif] text-sm text-black">
      <div className="flex items-center">
        <svg viewBox="0 0 19 17" className="ml-[7px] mr-2 h-[17px] w-[19px]" shapeRendering="crispEdges">
          <path d="M0 0h19v17H0z" fill="#000" />
          <path d="M0 0h19v2H0z" fill="#0000c0" />
          <path d="M2 11l3-4 2 2 2-4 2 3 2-4v5" fill="none" stroke="#0c0" />
          <path d="M1 14.5h17M15.5 3v13" stroke="#900" />
        </svg>
        <div className="flex gap-[15px]">
          {['File', 'Edit', 'View', 'Insert', 'Format', 'Drawing', 'Window', 'Help'].map((item) => (
            <button key={item} type="button">
              {item}
            </button>
          ))}
        </div>
      </div>
      <ChildButtons />
    </nav>
  );
}

function Icon({ name }) {
  return (
    <svg viewBox="0 0 16 16" className="size-4" shapeRendering="crispEdges">
      {ICONS[name].map(([d, fill, stroke, dash], i) => (
        <path key={i} d={d} fill={fill} stroke={stroke} strokeDasharray={dash} />
      ))}
    </svg>
  );
}

function ToolGroup({ items }) {
  return items.map((name, i) =>
    name === '|' ? (
      <span key={i} className="flex w-2 shrink-0 justify-center">
        <span className="h-[22px] w-px bg-[#a0a0a0]" />
      </span>
    ) : (
      <button
        key={i}
        type="button"
        aria-label={name}
        className={clsx(
          'flex h-[22px] w-[23px] shrink-0 items-center justify-center',
          name === 'pointer' && 'border border-r-white border-b-white border-l-[#a0a0a0] border-t-[#a0a0a0] bg-[#f8f8f8]'
        )}
      >
        <Icon name={name} />
      </button>
    )
  );
}

function Grip() {
  return (
    <span className="flex w-2 shrink-0 justify-center">
      <span className="h-[26px] border-l-2 border-dotted border-[#b8b8b8]" />
    </span>
  );
}

function Toolbar() {
  return (
    <div className="flex h-8 items-center overflow-hidden border-t border-b-2 border-t-[#a0a0a0] border-b-[#8c8c8c] bg-[#f0f0f0] pl-[23px]">
      <Grip />
      <ToolGroup items={TOOLBAR_A} />
      <div className="relative shrink-0">
        <select aria-label="Symbol" className="block h-[23px] w-[136px] appearance-none border border-[#dcdfe6] bg-white" />
        <svg viewBox="0 0 9 5" className="pointer-events-none absolute top-[9px] right-[5px] h-[5px] w-[9px]">
          <path d="M0 0h9L4.5 5z" />
        </svg>
      </div>
      <button type="button" aria-label="Go" className="flex w-[25px] shrink-0 items-center pl-[7px]">
        <svg viewBox="0 0 5 10" className="h-[10px] w-[5px]">
          <path d="M0 0l5 5-5 5z" />
        </svg>
      </button>
      <ToolGroup items={['find']} />
      <span className="w-[14px] shrink-0" />
      <Grip />
      <ToolGroup items={TOOLBAR_B} />
      <span className="w-[25px] shrink-0" />
      <Grip />
      <ToolGroup items={TOOLBAR_C} />
      <button type="button" className="w-6 shrink-0 font-['Liberation_Sans',sans-serif] text-xs text-black">
        abc
      </button>
    </div>
  );
}

const TABS = ['STOX_TF60', 'STOX_TF120', 'STOX TF240', 'STOX _100', 'STOX_TF30', 'FIB_TF60', 'FIB_TF120', 'FIB TF240', 'FIB_100', 'FIB_TF30', 'FIB Frame bassi', 'STOXX frame bassi', 'No PREZZI', 'Giornaliero'];

function WorkspaceTabs() {
  const [active, setActive] = useState('Giornaliero');
  const arrows = [
    ['First', 'M3.5 2v8M9 2L5 6l4 4z'],
    ['Previous', 'M8 2L4 6l4 4z'],
    ['Next', 'M4 2l4 4-4 4z'],
    ['Last', 'M8.5 2v8M3 2l4 4-4 4z'],
  ];
  return (
    <div className="flex h-[19px] overflow-hidden border-t-2 border-b border-t-black border-b-[#808080] bg-[#f0f0f0] font-['Liberation_Sans',sans-serif] text-xs text-black">
      {arrows.map(([label, d]) => (
        <button key={label} type="button" aria-label={label} className="flex w-[17px] shrink-0 items-center justify-center border border-t-white border-r-[#808080] border-b-[#808080] border-l-white">
          <svg viewBox="0 0 12 12" className="size-3" fill="#777" stroke="#777" strokeWidth="1">
            <path d={d} />
          </svg>
        </button>
      ))}
      {TABS.map((tab) => (
        <button
          key={tab}
          type="button"
          onClick={() => setActive(tab)}
          className={clsx('flex shrink-0 items-stretch leading-4 whitespace-nowrap', tab === active && 'font-bold')}
        >
          <svg viewBox="0 0 10 16" className="h-4 w-[10px]">
            {tab === active && <path d="M1 0h9v16H7z" fill="#fff" />}
            <path d="M1 0l6 16M4 8L1 16" fill="none" stroke="#000" />
          </svg>
          <span
            className={clsx(
              'border-b border-black',
              tab === active ? 'bg-white pr-2 pl-1' : tab.length > 12 ? 'px-2' : 'pr-[6px] pl-[5px]'
            )}
          >
            {tab}
          </span>
        </button>
      ))}
      <svg viewBox="0 0 8 16" className="h-4 w-2 shrink-0">
        <path d="M0 0h7L2 16H0z" fill="#fff" />
        <path d="M7 0L2 16" stroke="#000" />
      </svg>
    </div>
  );
}

function StatusBar() {
  const cells = ['Acct:', 'Open Psns:', 'DT BP:', 'Purch Pwr:', 'Closed P/L:', 'RT TE:', 'Open P/L:'];
  return (
    <footer className="flex h-[21px] items-center justify-between border-b-2 border-[#56647c] bg-[#f0edeb] pl-[2px] font-['Open_Sans',sans-serif] text-sm leading-5 whitespace-nowrap text-black">
      <span>For Help, press F1</span>
      <div className="flex">
        {cells.map((cell) => (
          <span key={cell} className="border-r border-[#d4d0ce] pr-[14px] pl-[5px]">
            {cell}
          </span>
        ))}
        <span className="border-r border-[#d4d0ce] px-[5px] text-[#008000]">ORDER BAR</span>
        <span className="border-r border-[#d4d0ce] px-[5px] text-[#008000]">MACROS</span>
        <span className="flex w-5 items-start justify-center border-r border-[#d4d0ce]">
          <svg viewBox="0 0 12 12" className="size-3">
            <circle cx="6" cy="6" r="5" fill="#e00000" stroke="#400" />
            <circle cx="4.5" cy="4" r="1.5" fill="#ff9a9a" />
          </svg>
        </span>
        <span className="px-[5px]">06/02/2023 14:06</span>
      </div>
    </footer>
  );
}

export default function App() {
  return (
    <div className="min-h-screen overflow-hidden bg-[#f0f0f0]">
      <TitleBar />
      <MenuBar />
      <Toolbar />
      <Charts />
      <div className="flex h-[22px] items-center justify-between border-l-2 border-[#8a8a8a] bg-[#ececec] pr-[10px] pl-[7px]">
        <button type="button" aria-label="Scroll left">
          <svg viewBox="0 0 5 8" className="h-2 w-[5px]" fill="#333"><path d="M5 0v8L0 4z" /></svg>
        </button>
        <div className="flex items-center gap-[10px]">
          <button type="button" aria-label="Scroll position" className="flex h-[18px] w-[19px] items-center justify-center gap-[2px] rounded-xs border border-[#979797] bg-linear-to-r from-[#f5f5f5] to-[#d2d2d2]">
            <span className="h-2 w-[2px] bg-[#777]" />
            <span className="h-2 w-[2px] bg-[#777]" />
            <span className="h-2 w-[2px] bg-[#777]" />
          </button>
          <button type="button" aria-label="Scroll right">
            <svg viewBox="0 0 5 8" className="h-2 w-[5px]" fill="#444"><path d="M0 0v8l5-4z" /></svg>
          </button>
        </div>
      </div>
      <WorkspaceTabs />
      <StatusBar />
    </div>
  );
}
